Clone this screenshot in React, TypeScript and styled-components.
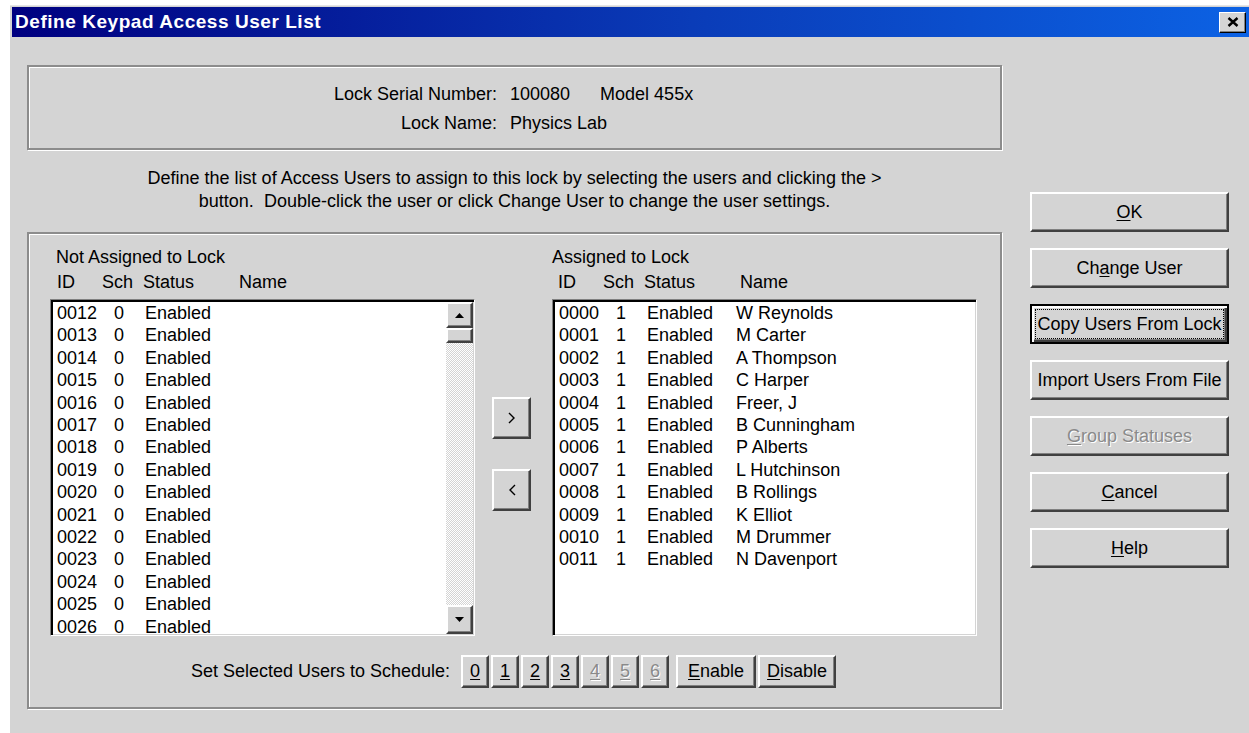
import * as React from 'react'
import styled, { createGlobalStyle, css } from 'styled-components'

const GlobalStyle = createGlobalStyle`
  html, body {
    margin: 0;
    padding: 0;
    background: #fff;
    overflow: hidden;
  }
  body {
    font-family: "Liberation Sans", Arial, sans-serif;
    font-size: 18px;
    color: #000;
  }
`

const FACE = '#d4d4d4'

interface UserRow {
  id: string,
  sch: number,
  status: string,
  name: string,
}

const notAssigned: UserRow[] = Array.from({ length: 15 }, (_, i) => ({
  id: String(12 + i).padStart(4, '0'),
  sch: 0,
  status: 'Enabled',
  name: '',
}))

const assignedNames = [
  'W Reynolds', 'M Carter', 'A Thompson', 'C Harper', 'Freer, J', 'B Cunningham',
  'P Alberts', 'L Hutchinson', 'B Rollings', 'K Elliot', 'M Drummer', 'N Davenport',
]

const assigned: UserRow[] = assignedNames.map((name, i) => ({
  id: String(i).padStart(4, '0'),
  sch: 1,
  status: 'Enabled',
  name,
}))

const Window = styled.div`
  margin: 5px 0 0 10px;
  height: calc(100vh - 5px);
  box-sizing: border-box;
  padding: 1px 0 0 2px;
  background: ${FACE};
  border-top: 1px solid #e6e6e6;
  display: flex;
  flex-direction: column;
`

const TitleBar = styled.div`
  height: 30px;
  display: flex;
  align-items: center;
  padding-left: 3px;
  background: linear-gradient(90deg, #000080 0%, #0a3cb8 55%, #0c62e4 100%);
`

const TitleText = styled.div`
  color: #fff;
  font-weight: bold;
  font-size: 19px;
  letter-spacing: 0.55px;
`

const CloseButton = styled.div`
  margin-left: auto;
  margin-right: 3px;
  width: 27px;
  height: 21px;
  box-sizing: border-box;
  background: ${FACE};
  border: 1px solid;
  border-color: #fff #000 #000 #fff;
  box-shadow: inset -1px -1px #808080;
  display: flex;
  align-items: center;
  justify-content: center;
`

const Body = styled.div`
  flex: 1;
  display: flex;
  padding: 28px 0 0 15px;
`

const MainColumn = styled.div`
  width: 975px;
  display: flex;
  flex-direction: column;
`

const etched = css`
  border: 2px solid #8c8c8c;
  box-shadow: inset 1px 1px 0 #fff, 1px 1px 0 #fff;
`

const InfoBox = styled.div`
  ${etched};
  height: 85px;
  box-sizing: border-box;
  padding-top: 15px;
  display: grid;
  grid-template-columns: 468px 1fr;
  column-gap: 13px;
  row-gap: 5px;
  align-content: start;
  line-height: 24px;
`

const InfoLabel = styled.div`
  text-align: right;
`

const InfoValue = styled.div`
  display: flex;
  gap: 30px;
`

const Description = styled.div`
  margin: 17px auto 0;
  width: 760px;
  text-align: center;
  line-height: 23px;
`

const GroupBox = styled.div`
  ${etched};
  margin-top: 19px;
  padding: 12px 23px 19px 21px;
  display: flex;
  flex-direction: column;
`

const ListsRow = styled.div`
  display: flex;
`

const Pane = styled.div`
  width: 426px;
  display: flex;
  flex-direction: column;
`

const Caption = styled.div<{ $indent: number }>`
  line-height: 22px;
  padding-left: ${(p) => p.$indent}px;
`

const HeaderRow = styled.div<{ $indent: number }>`
  margin-top: 3px;
  line-height: 22px;
  display: grid;
  grid-template-columns: 45px 41px 96px 1fr;
  padding-left: ${(p) => p.$indent}px;
`

const ListBox = styled.div`
  margin-top: 6px;
  height: 337px;
  box-sizing: border-box;
  background: #fff;
  border: 1px solid;
  border-color: #808080 #fff #fff #808080;
  box-shadow: inset 2px 2px #000, inset -1px -1px ${FACE};
  padding: 2px 1px 1px 2px;
  display: flex;
`

const Rows = styled.div`
  flex: 1;
  overflow: hidden;
  padding-left: 4px;
`

const Row = styled.div`
  display: grid;
  grid-template-columns: 57px 31px 89px 1fr;
  line-height: 22.4px;
  white-space: nowrap;
`

const ScrollBar = styled.div`
  width: 27px;
  display: flex;
  flex-direction: column;
`

const bevel = css`
  background: ${FACE};
  border: 2px solid;
  border-color: #fff #404040 #404040 #fff;
  box-shadow: inset -1px -1px #808080;
  box-sizing: border-box;
`

const ScrollArrow = styled.div<{ $h: number }>`
  ${bevel};
  height: ${(p) => p.$h}px;
  display: flex;
  align-items: center;
  justify-content: center;
`

const ScrollThumb = styled.div`
  ${bevel};
  height: 15px;
`

const ScrollTrack = styled.div`
  flex: 1;
  background: repeating-conic-gradient(#fff 0 25%, ${FACE} 0 50%) 0 0 / 2px 2px;
`

const MoveColumn = styled.div`
  width: 77px;
  box-sizing: border-box;
  padding: 151px 0 0 17px;
  display: flex;
  flex-direction: column;
  gap: 30px;
`

const Button = styled.button<{ $w?: number, $h?: number, $focused?: boolean }>`
  ${bevel};
  width: ${(p) => (p.$w ? `${p.$w}px` : '100%')};
  height: ${(p) => p.$h || 40}px;
  padding: 0;
  font-family: "Liberation Sans", Arial, sans-serif;
  font-size: 18px;
  color: #000;
  display: flex;
  align-items: center;
  justify-content: center;
  white-space: nowrap;
  ${(p) => p.$focused && css`
    border: 2px solid #000;
    box-shadow: inset 2px 2px #fff, inset -2px -2px #404040, inset -3px -3px #808080;
    outline: 1px dotted #000;
    outline-offset: -6px;
  `}
  &:disabled {
    color: #8a8a8a;
    text-shadow: 1px 1px 0 #fff;
  }
  u {
    text-underline-offset: 2px;
    text-decoration-thickness: 1px;
  }
`

const ScheduleRow = styled.div`
  margin-top: 19px;
  display: flex;
  justify-content: center;
  align-items: center;
`

const ScheduleLabel = styled.div`
  margin-right: 11px;
`

const ButtonGroup = styled.div<{ $gap: number }>`
  display: flex;
  gap: 2px;
  margin-left: ${(p) => p.$gap}px;
`

const SideColumn = styled.div`
  width: 199px;
  margin-left: 28px;
  padding-top: 127px;
  display: flex;
  flex-direction: column;
  gap: 16px;
`

const ArrowUp = () => (
  <svg width="9" height="5" viewBox="0 0 9 5"><polygon points="4.5,0 9,5 0,5" fill="#000" /></svg>
)

const ArrowDown = () => (
  <svg width="9" height="5" viewBox="0 0 9 5"><polygon points="0,0 9,0 4.5,5" fill="#000" /></svg>
)

const Chevron = ({ right }: { right: boolean }) => (
  <svg width="8" height="12" viewBox="0 0 8 12">
    <polyline
      points={right ? '1,1 6,6 1,11' : '7,1 2,6 7,11'}
      fill="none"
      stroke="#000"
      strokeWidth="1.4"
    />
  </svg>
)

const UserList = ({ rows, scroll }: { rows: UserRow[], scroll?: boolean }) => (
  <ListBox>
    <Rows>
      {rows.map((r) => (
        <Row key={r.id}>
          <span>{r.id}</span>
          <span>{r.sch}</span>
          <span>{r.status}</span>
          <span>{r.name}</span>
        </Row>
      ))}
    </Rows>
    {scroll && (
      <ScrollBar>
        <ScrollArrow $h={26}><ArrowUp /></ScrollArrow>
        <ScrollThumb />
        <ScrollTrack />
        <ScrollArrow $h={29}><ArrowDown /></ScrollArrow>
      </ScrollBar>
    )}
  </ListBox>
)

const Columns = ({ indent }: { indent: number }) => (
  <HeaderRow $indent={indent}>
    <span>ID</span>
    <span>Sch</span>
    <span>Status</span>
    <span>Name</span>
  </HeaderRow>
)

const App = () => (
  <>
    <GlobalStyle />
    <Window>
      <TitleBar>
        <TitleText>Define Keypad Access User List</TitleText>
        <CloseButton>
          <svg width="12" height="10" viewBox="0 0 12 10">
            <path d="M1.5 1 L10.5 9 M10.5 1 L1.5 9" stroke="#000" strokeWidth="2.4" />
          </svg>
        </CloseButton>
      </TitleBar>
      <Body>
        <MainColumn>
          <InfoBox>
            <InfoLabel>Lock Serial Number:</InfoLabel>
            <InfoValue><span>100080</span><span>Model 455x</span></InfoValue>
            <InfoLabel>Lock Name:</InfoLabel>
            <InfoValue><span>Physics Lab</span></InfoValue>
          </InfoBox>
          <Description>
            Define the list of Access Users to assign to this lock by selecting the users and clicking the &gt;
            button.&nbsp; Double-click the user or click Change User to change the user settings.
          </Description>
          <GroupBox>
            <ListsRow>
              <Pane>
                <Caption $indent={6}>Not Assigned to Lock</Caption>
                <Columns indent={7} />
                <UserList rows={notAssigned} scroll />
              </Pane>
              <MoveColumn>
                <Button $w={39} $h={42}><Chevron right /></Button>
                <Button $w={39} $h={42}><Chevron right={false} /></Button>
              </MoveColumn>
              <Pane>
                <Caption $indent={-1}>Assigned to Lock</Caption>
                <Columns indent={6} />
                <UserList rows={assigned} />
              </Pane>
            </ListsRow>
            <ScheduleRow>
              <ScheduleLabel>Set Selected Users to Schedule:</ScheduleLabel>
              <ButtonGroup $gap={0}>
                {[0, 1, 2, 3, 4, 5, 6].map((n) => (
                  <Button key={n} $w={28} $h={33} disabled={n > 3}><u>{n}</u></Button>
                ))}
              </ButtonGroup>
              <ButtonGroup $gap={7}>
                <Button $w={80} $h={33}><u>E</u>nable</Button>
                <Button $w={78} $h={33}><u>D</u>isable</Button>
              </ButtonGroup>
            </ScheduleRow>
          </GroupBox>
        </MainColumn>
        <SideColumn>
          <Button><u>O</u>K</Button>
          <Button>Ch<u>a</u>nge User</Button>
          <Button $focused>Copy Users From Lock</Button>
          <Button>Import Users From File</Button>
          <Button disabled><u>G</u>roup Statuses</Button>
          <Button><u>C</u>ancel</Button>
          <Button><u>H</u>elp</Button>
        </SideColumn>
      </Body>
    </Window>
  </>
)

export default App
